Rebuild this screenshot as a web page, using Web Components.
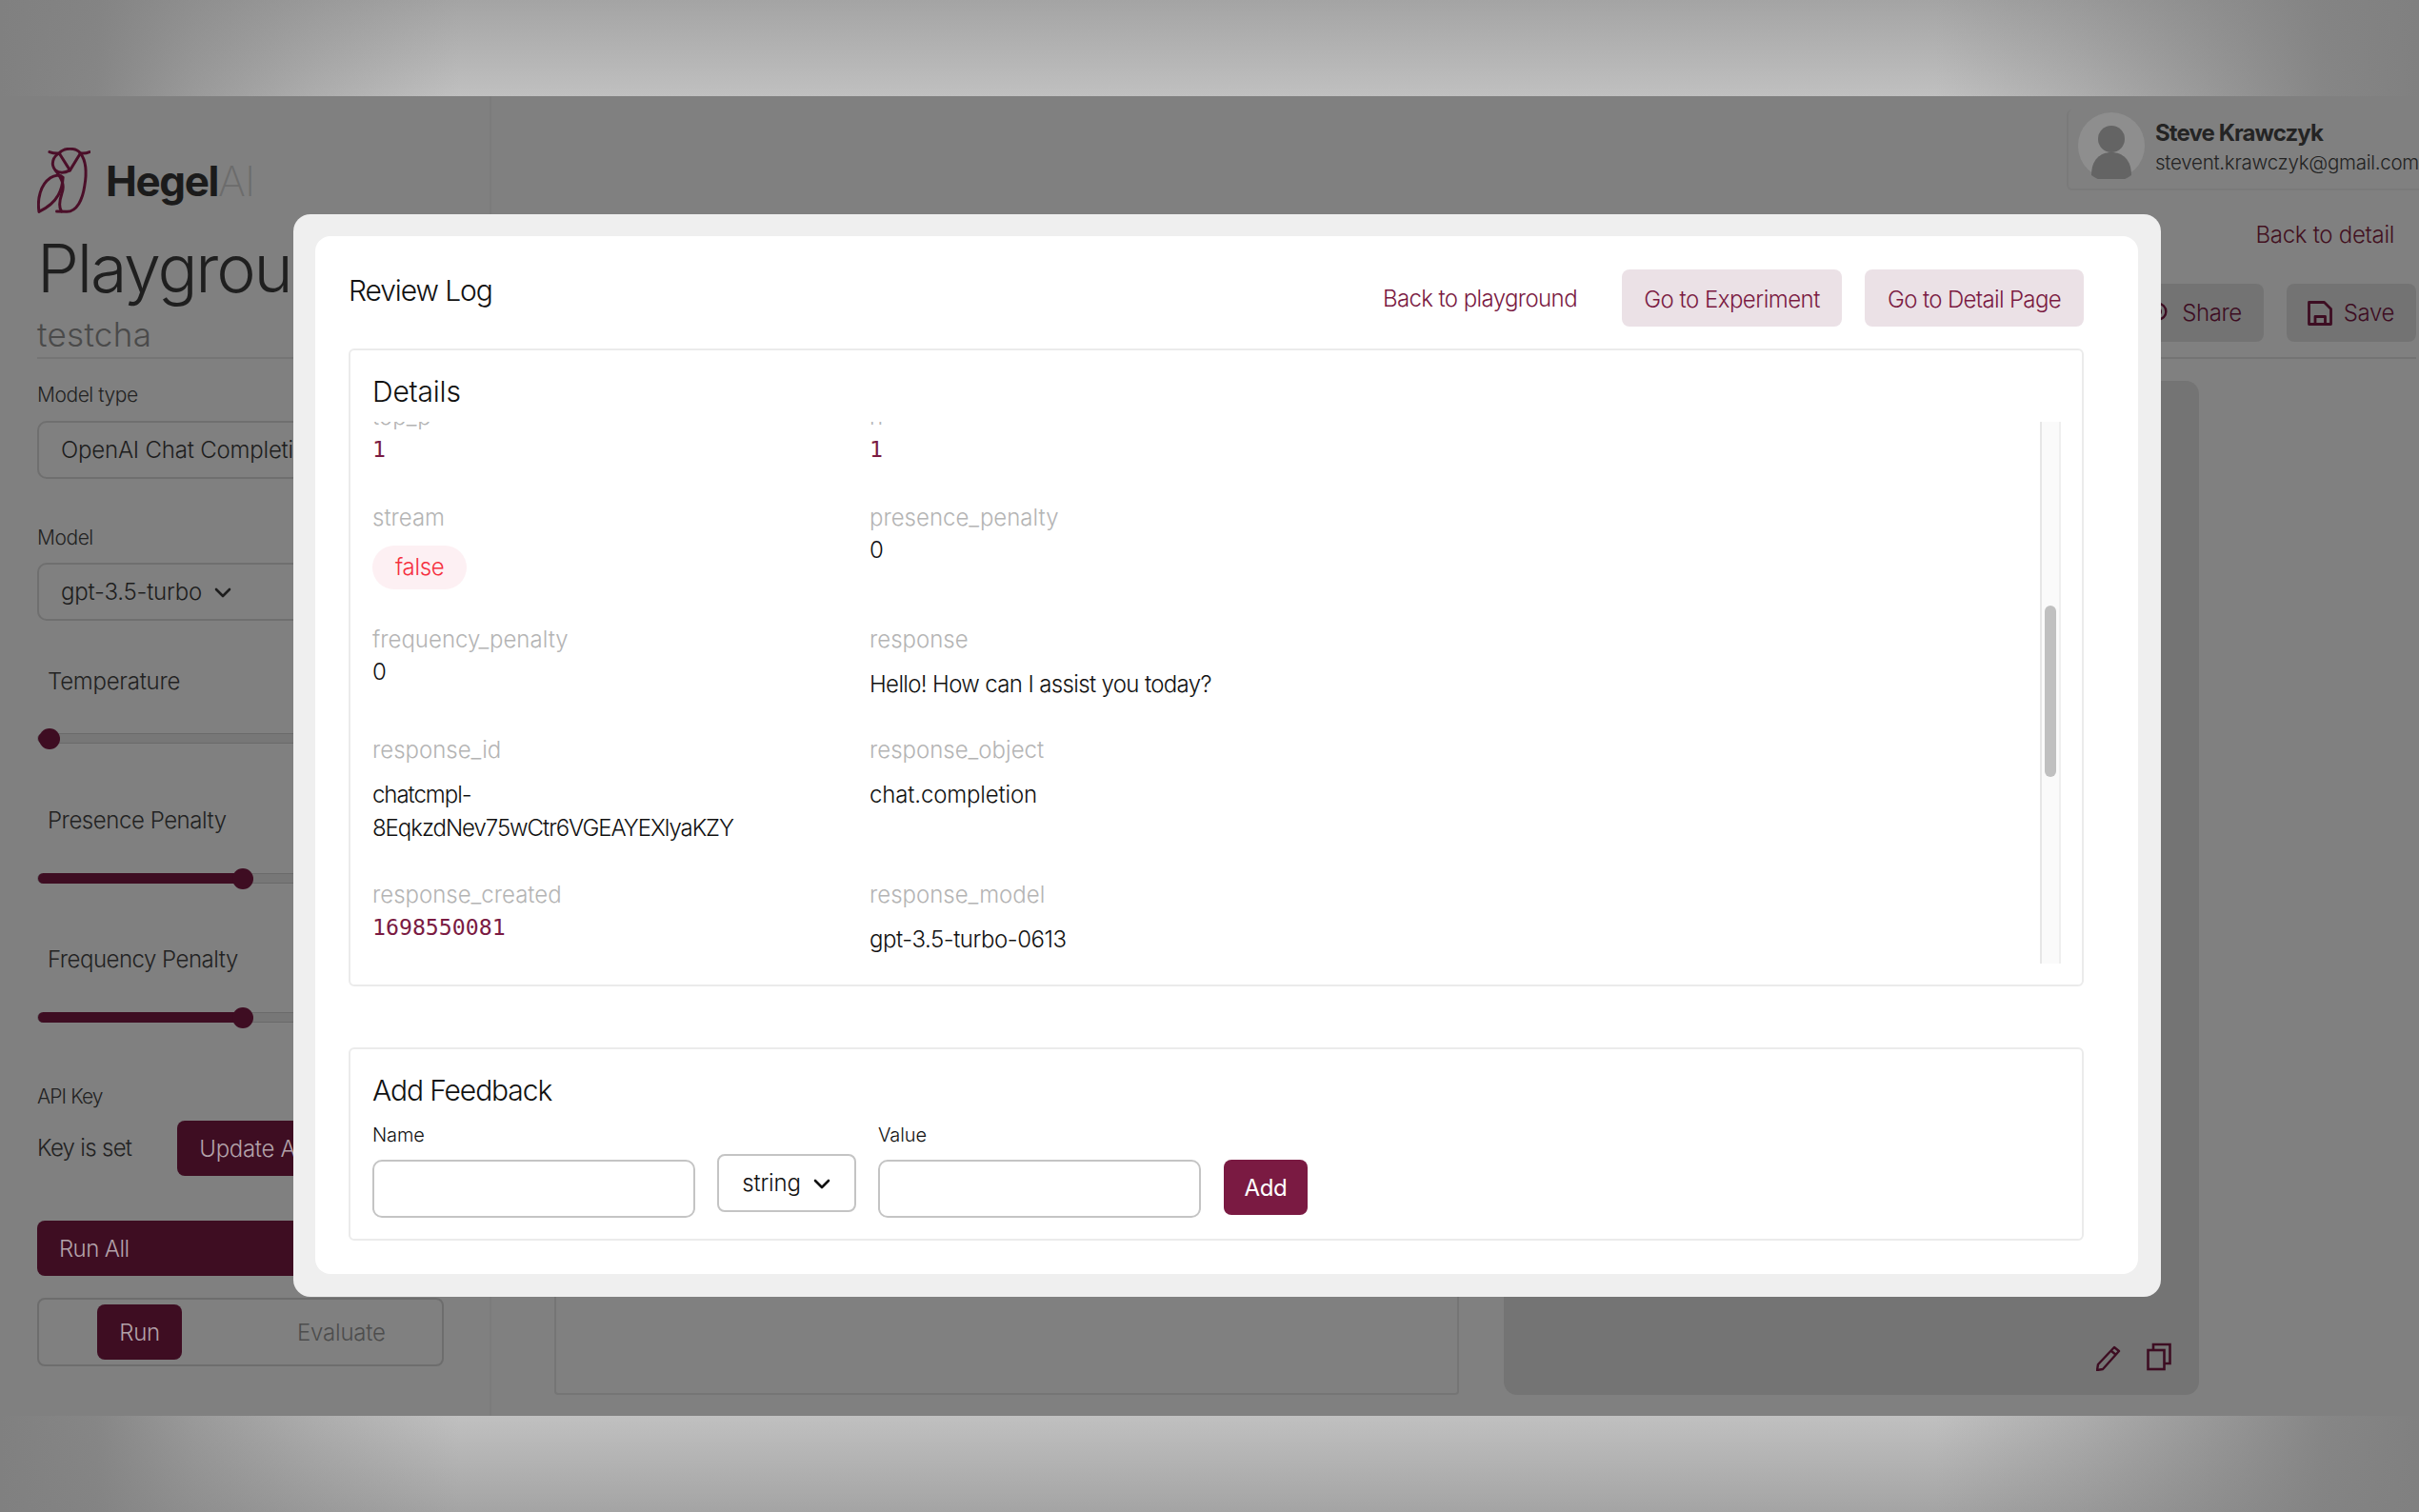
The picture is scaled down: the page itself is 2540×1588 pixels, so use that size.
<!DOCTYPE html>
<html lang="en"><head><meta charset="utf-8"><title>Review Log</title>
<style>
html,body{margin:0;padding:0;background:#808080}
body{width:2540px;height:1588px;overflow:hidden;font-family:Inter,"Noto Sans",sans-serif;display:flex;flex-direction:column}
</style></head><body>
<glow-band edge="top"></glow-band>
<app-frame></app-frame>
<glow-band edge="bottom"></glow-band>
<script>
function def(name,html,setup){
  customElements.define(name,class extends HTMLElement{
    connectedCallback(){
      if(this.shadowRoot)return;
      const r=this.attachShadow({mode:'open'});
      r.innerHTML=typeof html==='function'?html(this):html;
      if(setup)setup(this,r);
    }
  });
}
const g=a=>`rgba(128,128,128,${a})`;
def('glow-band',el=>`<style>:host{display:block;height:101px;flex:none;background:linear-gradient(to right,#808080 0%,${g(.9)} 4%,${g(.6)} 8%,${g(.3)} 13%,${g(0)} 19%,${g(0)} 80%,${g(.3)} 86%,${g(.6)} 91%,${g(.9)} 96%,#808080 100%),linear-gradient(${el.getAttribute('edge')==='top'?'to top':'to bottom'},#c0c0c0 0%,#a4a4a4 100%)}</style>`);

def('hegel-logo',`<style>:host{display:flex;align-items:center;height:68px}
svg{width:56px;height:69px;flex:none}
.t{margin-left:16px;font-size:44px;line-height:68px;letter-spacing:-1.4px;font-weight:700;color:#1b1b1b;position:relative;top:1px;white-space:nowrap}
.t span{font-weight:200;color:#6c6c6c;letter-spacing:-1px}</style>
<svg viewBox="120 222 165 208" fill="none" stroke="#4b0f29" stroke-width="9" stroke-linecap="round" stroke-linejoin="round">
<path d="M157 236C168 240 178 241 188 240C196 230 208 226 222 226C236 226 248 230 255 240C265 241 275 240 284 236"/>
<path d="M188 240L222 294L255 240"/>
<path d="M255 240C272 262 276 300 268 345C262 385 245 424 212 425L180 424"/>
<path d="M188 240C168 250 160 275 176 294C190 305 206 302 222 294"/>
<path d="M176 294C200 325 205 345 196 368C188 392 186 410 195 424"/>
<path d="M124 425C118 385 128 340 160 318C172 310 190 306 200 316C198 350 188 395 124 425Z"/>
</svg><div class="t">Hegel<span>AI</span></div>`);

def('field-select',el=>`<style>:host{display:flex;align-items:center;box-sizing:border-box;height:61px;border:2px solid #6f6f6f;border-radius:10px;padding-left:23px;font-size:24px;font-weight:300;letter-spacing:-.2px;color:#1d1d1d;white-space:nowrap;overflow:hidden}
svg{width:20px;height:20px;margin-left:12px}</style><slot></slot>${el.hasAttribute('chev')?'<svg viewBox="0 0 20 20" fill="none" stroke="currentColor" stroke-width="2.6" stroke-linecap="round" stroke-linejoin="round"><path d="M3 7l7 7 7-7"/></svg>':''}`);

def('side-label',el=>`<style>:host{display:block;font-size:${el.getAttribute('size')||21}px;font-weight:300;line-height:28px;letter-spacing:${el.getAttribute('ls')||'-.45px'};color:${el.getAttribute('color')||'#222'};white-space:nowrap}</style><slot></slot>`);

def('range-slider',el=>{const v=+el.getAttribute('value');return `<style>:host{display:flex;align-items:center;height:22px}
.track{position:relative;flex:1;height:11px;border-radius:6px;background:#777;border:1px solid #6a6a6a;box-sizing:border-box}
.fill{position:absolute;left:0;top:-1px;height:11px;width:${v}px;background:#3e0d22;border-radius:6px}
.thumb{position:absolute;left:${v-11}px;top:-6px;width:22px;height:22px;border-radius:50%;background:#3e0d22}</style>
<div class="track"><div class="fill"></div><div class="thumb"></div></div>`});

def('app-sidebar',`<style>:host{display:flex;flex-direction:column;flex:none;box-sizing:border-box;width:516px;padding:54px 48px 0 39px;border-right:2px solid #7c7c7c;height:100%;color:#222}
.title{font-size:70px;line-height:80px;letter-spacing:-2.2px;margin:19px 0 0 0;font-weight:300;color:#1f1f1f;white-space:nowrap}
.sub{font-size:35px;font-weight:300;line-height:40px;letter-spacing:.3px;color:#4a4a4a;margin-top:9px}
hr{border:0;border-top:2px solid #757575;margin:4px 0 0;}
.btn{display:flex;align-items:center;background:#3e0d22;color:#b3a2aa;font-size:24px;font-weight:300;border-radius:8px;box-sizing:border-box;white-space:nowrap;letter-spacing:-.3px}
.key{display:flex;align-items:center;height:58px}
.tabs{display:flex;align-items:center;box-sizing:border-box;height:72px;margin-top:23px;border:2px solid #6d6d6d;border-radius:8px;font-size:24px;font-weight:300}
</style>
<hegel-logo></hegel-logo>
<h1 class="title">Playground</h1>
<div class="sub">testcha</div>
<hr>
<side-label style="margin-top:24px">Model type</side-label>
<field-select style="margin-top:13px">OpenAI Chat Completion</field-select>
<side-label style="margin-top:48px">Model</side-label>
<field-select chev style="margin-top:12px;width:280px">gpt-3.5-turbo</field-select>
<side-label size="24" ls="-.25px" style="margin:50px 0 0 11px">Temperature</side-label>
<range-slider value="12" style="margin-top:34px"></range-slider>
<side-label size="24" style="margin:62px 0 0 11px">Presence Penalty</side-label>
<range-slider value="215" style="margin-top:35px"></range-slider>
<side-label size="24" ls="-.5px" style="margin:61px 0 0 11px">Frequency Penalty</side-label>
<range-slider value="215" style="margin-top:35px"></range-slider>
<side-label ls="-.9px" style="margin-top:59px">API Key</side-label>
<div class="key" style="margin-top:11px"><side-label size="24" ls="-.7px">Key is set</side-label>
 <div class="btn" style="height:58px;padding:0 23px;margin-left:48px;flex:1">Update API Key</div></div>
<div class="btn" style="height:58px;padding:0 23px;margin-top:47px;letter-spacing:-.6px">Run All</div>
<div class="tabs"><div class="btn" style="height:58px;width:89px;justify-content:center;margin-left:61px">Run</div><div style="margin-left:121px;color:#4d4d4d;letter-spacing:-.2px">Evaluate</div></div>`);

def('user-card',`<style>:host{display:flex;align-items:center;box-sizing:border-box;height:85px;width:370px;align-self:flex-end;border:2px solid #7a7a7a;border-right:0;border-top:0;border-radius:6px 0 0 6px;padding:0 0 0 10px;white-space:nowrap;overflow:hidden}
svg{width:70px;height:70px;flex:none;margin-top:-8px}
.n{font-size:24px;font-weight:700;color:#242424;line-height:32px;letter-spacing:-.9px}
.e{font-size:20.5px;font-weight:300;color:#222;line-height:30px;letter-spacing:-.25px}
.c{margin:-4px 0 0 11px}</style>
<svg viewBox="0 0 70 70"><circle cx="35" cy="35" r="35" fill="#8e8e8e"/><circle cx="35" cy="28" r="14" fill="#646464"/><path d="M14 66c0-16 9-24 21-24s21 8 21 24a35 35 0 0 1-42 0z" fill="#646464"/></svg>
<div class="c"><div class="n">Steve Krawczyk</div><div class="e">stevent.krawczyk@gmail.com</div></div>`);

def('action-btn',`<style>:host{display:flex;align-items:center;gap:12px;height:61px;box-sizing:border-box;padding:0 23px;background:#737373;border-radius:8px;font-size:24px;font-weight:300;letter-spacing:-.4px;color:#3d0d22;white-space:nowrap}
::slotted(svg){width:26px;height:26px;flex:none}</style><slot></slot>`);

def('main-panel',`<style>:host{display:flex;flex-direction:column;flex:1;min-width:0;height:100%;box-sizing:border-box;padding-top:14px}
.back{align-self:flex-end;margin:33px 26px 0 0;font-size:24px;font-weight:300;line-height:28px;letter-spacing:-.3px;color:#42101f}
.acts{display:flex;justify-content:flex-end;gap:24px;margin-top:37px;padding-right:3px}
hr{border:0;border-top:2px solid #747474;margin:16px 3px 0 0}
.row{display:flex;gap:47px;margin:23px 0 0 66px;height:1065px}
.box{width:950px;box-sizing:border-box;border:2px solid #757575;border-radius:4px}
.out{width:730px;box-sizing:border-box;background:#747474;border-radius:14px;display:flex;justify-content:flex-end;align-items:flex-end;gap:27px;padding:0 29px 25px 0}
svg{display:block}</style>
<user-card></user-card>
<div class="back">Back to detail</div>
<div class="acts">
<action-btn style="width:300px;justify-content:flex-end"><svg viewBox="0 0 28 28" fill="none" stroke="#3d0d22" stroke-width="2.6"><circle cx="14" cy="12" r="9"/><circle cx="14" cy="12" r="3"/><path d="M9 22l-2 4"/></svg>Share</action-btn>
<action-btn style="padding:0 23px 0 22px"><svg viewBox="1 1 26 26" fill="none" stroke="#3d0d22" stroke-width="2.8" stroke-linejoin="round"><path d="M2.500 2.500h16l7 7v16h-23z"/><path d="M9 25.500v-8h10.500v8"/></svg>Save</action-btn>
</div>
<hr>
<div class="row"><div class="box"></div><div class="out">
<svg width="26" height="27" viewBox="0 0 26 27" fill="none" stroke="#3d0d22" stroke-width="2.4" stroke-linejoin="round"><path d="M19 2l5 4L7 25l-6 1 1-6z"/><path d="M16 6l5 4"/></svg>
<svg width="26" height="30" viewBox="0 0 26 30" fill="none" stroke="#3d0d22" stroke-width="2.6"><rect x="1.5" y="8" width="17" height="20"/><path d="M7 8V2h17.500v20H18.500"/></svg>
</div></div>`);

def('kv-item',el=>`<style>:host{display:block;min-width:0}
.l{font-size:24px;font-weight:300;line-height:35px;color:#b4b4b4;white-space:nowrap;letter-spacing:0}
</style><div class="l">${el.getAttribute('k')}</div><slot></slot>`);
def('val-num',`<style>:host{display:block;font-family:"DejaVu Sans Mono",monospace;font-size:23.2px;line-height:34px;color:#7a1a42}</style><slot></slot>`);
def('val-zero',`<style>:host{display:block;font-size:24px;font-weight:300;line-height:34px;color:#111}</style><slot></slot>`);
def('val-text',`<style>:host{display:block;font-size:24px;font-weight:300;line-height:35px;color:#111;margin-top:12px;letter-spacing:-.65px}</style><slot></slot>`);
def('val-bool',`<style>:host{display:inline-block;margin-top:12px;font-size:24px;font-weight:300;line-height:46px;height:46px;padding:0 24px;border-radius:23px;background:#fdf0f3;color:#f5303f;letter-spacing:-.3px}</style><slot></slot>`);

def('details-card',`<style>:host{display:flex;flex-direction:column;box-sizing:border-box;height:670px;border:2px solid #ebebeb;border-radius:6px;padding:23px 22px 22px 23px}
h2{margin:0;font-size:30px;line-height:40px;font-weight:300;color:#111;letter-spacing:-.2px}
.wrap{display:flex;height:569px;margin-top:12px}
.scroll{flex:1;overflow:hidden}
.grid{display:grid;grid-template-columns:522px 1fr;grid-template-rows:106px 128px 116px 152px 90px;margin-top:-23px}
.bar{width:22px;flex:none;box-sizing:border-box;background:#fafafa;border-left:2px solid #e6e6e6;border-right:2px solid #efefef;padding:193px 3px 0}
.thumb{height:180px;background:#c0c0c0;border-radius:6px}</style>
<h2>Details</h2>
<div class="wrap"><div class="scroll"><div class="grid">
<kv-item k="top_p"><val-num>1</val-num></kv-item><kv-item k="n"><val-num>1</val-num></kv-item>
<kv-item k="stream"><val-bool>false</val-bool></kv-item><kv-item k="presence_penalty"><val-zero>0</val-zero></kv-item>
<kv-item k="frequency_penalty"><val-zero>0</val-zero></kv-item><kv-item k="response"><val-text>Hello! How can I assist you today?</val-text></kv-item>
<kv-item k="response_id"><val-text style="letter-spacing:-1.05px">chatcmpl-<br>8EqkzdNev75wCtr6VGEAYEXlyaKZY</val-text></kv-item><kv-item k="response_object"><val-text style="letter-spacing:-.15px">chat.completion</val-text></kv-item>
<kv-item k="response_created"><val-num>1698550081</val-num></kv-item><kv-item k="response_model"><val-text style="letter-spacing:-.45px">gpt-3.5-turbo-0613</val-text></kv-item>
</div></div><div class="bar"><div class="thumb"></div></div></div>`);

def('text-field',el=>`<style>:host{display:block;width:339px;flex:none}
.l{font-size:20px;font-weight:300;line-height:28px;color:#111;height:28px;white-space:nowrap;letter-spacing:-.1px}
.i{margin-top:12px;height:61px;box-sizing:border-box;border:2px solid #c4c4c4;border-radius:10px;background:#fff}</style><div class="l">${el.getAttribute('label')}</div><div class="i"></div>`);

def('feedback-card',`<style>:host{display:block;box-sizing:border-box;height:203px;border:2px solid #ebebeb;border-radius:6px;padding:23px 23px 0}
h2{margin:0;font-size:30px;line-height:40px;font-weight:300;color:#111;letter-spacing:-1.1px}
.row{display:flex;margin-top:13px;align-items:flex-start}
.sel{display:flex;align-items:center;justify-content:center;width:146px;height:61px;box-sizing:border-box;margin:34px 23px 0;border:2px solid #c4c4c4;border-radius:8px;font-size:24px;font-weight:300;color:#111;letter-spacing:-.2px}
.sel svg{width:20px;height:20px;margin-left:12px}
.add{display:flex;align-items:center;justify-content:center;width:88px;height:58px;margin:40px 0 0 24px;background:#7a1a42;border-radius:8px;color:#fff;font-size:24px;letter-spacing:-.3px}
</style><h2>Add Feedback</h2>
<div class="row"><text-field label="Name"></text-field>
<div class="sel">string<svg viewBox="0 0 20 20" fill="none" stroke="currentColor" stroke-width="2.6" stroke-linecap="round" stroke-linejoin="round"><path d="M3 7l7 7 7-7"/></svg></div>
<text-field label="Value"></text-field><div class="add">Add</div></div>`);

def('review-modal',`<style>:host{position:absolute;left:308px;top:124px;width:1961px;height:1137px;box-sizing:border-box;background:#efefef;border-radius:18px;padding:23px 24px 24px 23px}
.in{background:#fff;border-radius:16px;height:1090px;box-sizing:border-box;padding:35px 57px 0 35px;display:flex;flex-direction:column}
.head{display:flex;align-items:flex-start;height:60px;flex:none}
.title{font-size:30px;font-weight:300;line-height:40px;margin-top:2px;color:#111;letter-spacing:-1.1px;flex:1}
.link{font-size:24px;font-weight:300;line-height:62px;color:#7a1a42;margin-right:47px;white-space:nowrap;letter-spacing:-.6px}
.sec{display:flex;align-items:center;justify-content:center;width:231px;height:60px;padding-top:2px;box-sizing:border-box;border-radius:8px;background:#ebe1e6;color:#7a1a42;font-size:24px;font-weight:300;white-space:nowrap;letter-spacing:-.5px}
</style><div class="in"><div class="head"><div class="title">Review Log</div><div class="link">Back to playground</div><div class="sec">Go to Experiment</div><div class="sec" style="margin-left:24px;width:230px;letter-spacing:-.65px">Go to Detail Page</div></div>
<details-card style="margin-top:23px"></details-card>
<feedback-card style="margin-top:64px"></feedback-card></div>`);

def('app-frame',`<style>:host{display:flex;position:relative;height:1386px;flex:none;background:#808080;overflow:hidden}</style>
<app-sidebar></app-sidebar><main-panel></main-panel><review-modal></review-modal>`);
</script>
</body></html>
